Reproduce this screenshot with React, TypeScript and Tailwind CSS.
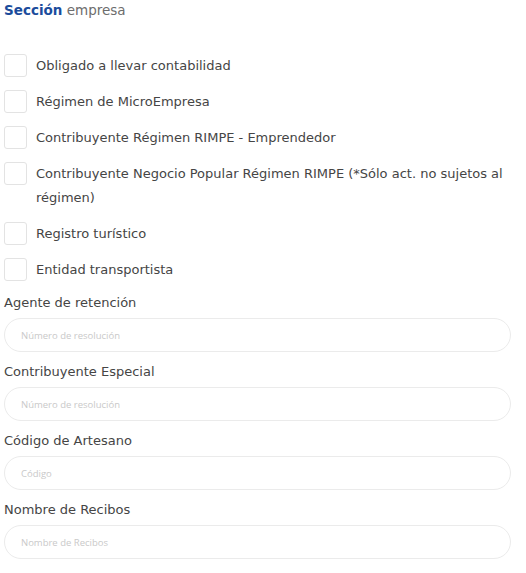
const checks = [
  "Obligado a llevar contabilidad",
  "Régimen de MicroEmpresa",
  "Contribuyente Régimen RIMPE - Emprendedor",
  "Contribuyente Negocio Popular Régimen RIMPE (*Sólo act. no sujetos al régimen)",
  "Registro turístico",
  "Entidad transportista",
];

const fields = [
  { label: "Agente de retención", placeholder: "Número de resolución" },
  { label: "Contribuyente Especial", placeholder: "Número de resolución" },
  { label: "Código de Artesano", placeholder: "Código" },
  { label: "Nombre de Recibos", placeholder: "Nombre de Recibos" },
];

export default function App() {
  return (
    <main
      className="w-[526px] bg-white pl-1 pr-[15px] text-[#454545]"
      style={{ fontFamily: '"DejaVu Sans", sans-serif' }}
    >
      <h2 className="pt-[1px] text-[13.5px] leading-[18px]">
        <span className="font-bold text-[#1b4c9c]">Sección</span>{" "}
        <span className="text-[#6d6d6d]">empresa</span>
      </h2>

      <div className="mt-[35px] flex flex-col gap-3">
        {checks.map((c) => (
          <label key={c} className="flex items-start gap-[9px]">
            <input
              type="checkbox"
              className="h-[23px] w-[23px] shrink-0 appearance-none rounded-[3px] border border-[#e3e3e3] bg-white"
            />
            <span className="text-[13px] leading-[24px]">{c}</span>
          </label>
        ))}
      </div>

      <div className="mt-[9px] flex flex-col">
        {fields.map((f) => (
          <div key={f.label} className="mb-[8px] flex flex-col">
            <span className="text-[13px] leading-[24px]">{f.label}</span>
            <input
              placeholder={f.placeholder}
              className="mt-[3px] h-[34px] w-full rounded-full border border-[#ebebeb] px-4 text-[9.5px] outline-none placeholder:text-[#c9c9c9]"
              style={{ fontFamily: '"Open Sans", sans-serif' }}
            />
          </div>
        ))}
      </div>
    </main>
  );
}
